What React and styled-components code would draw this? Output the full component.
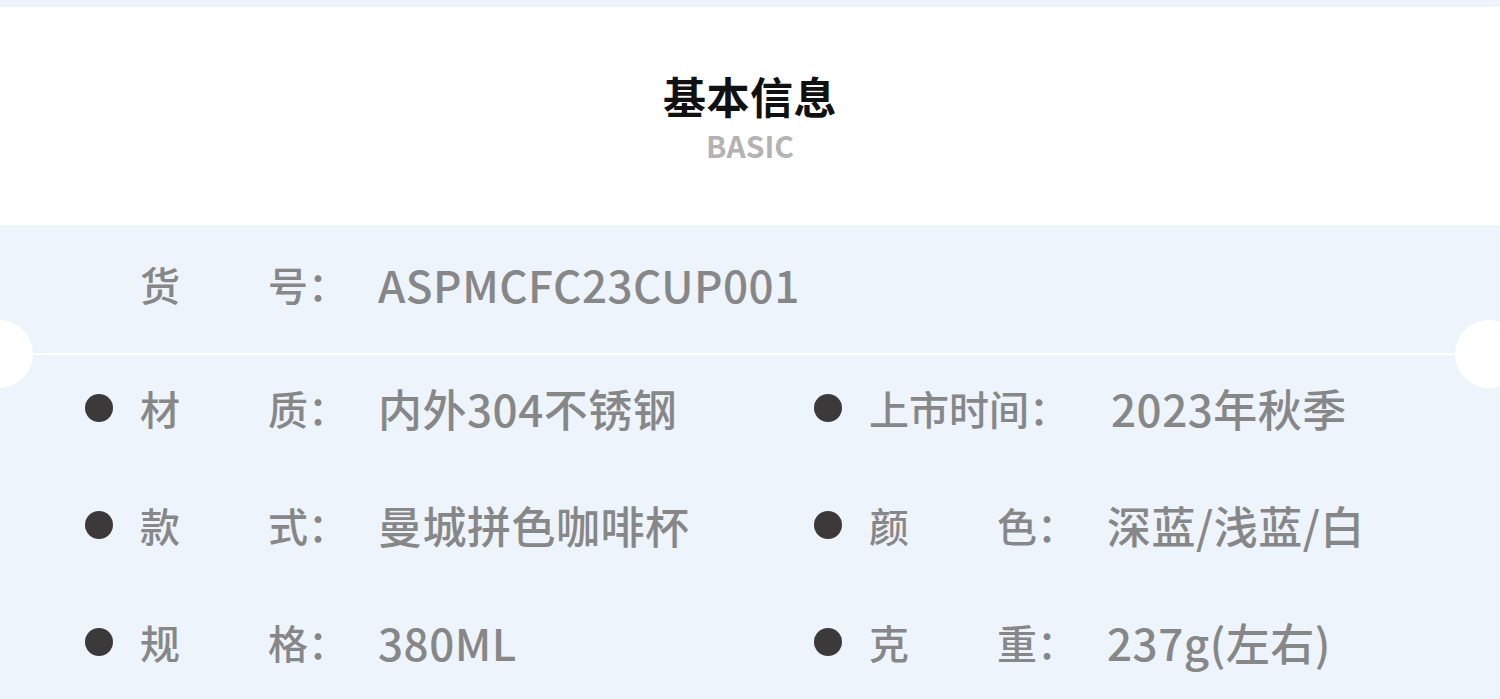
import React from 'react';
import styled, { createGlobalStyle } from 'styled-components';

const GlobalStyle = createGlobalStyle`
  html, body {
    margin: 0;
    padding: 0;
    background: #edf4fc;
    font-family: "Noto Sans CJK SC", "Noto Sans", sans-serif;
  }
`;

const Page = styled.div`
  width: 1500px;
  height: 699px;
  overflow: hidden;
  background: #edf4fc;
  padding-top: 7px;
  box-sizing: border-box;
`;

const Header = styled.div`
  height: 218px;
  background: #ffffff;
  display: flex;
  flex-direction: column;
  align-items: center;
  padding-top: 68px;
  box-sizing: border-box;
`;

const Title = styled.h1`
  margin: 0;
  font-size: 43px;
  line-height: 40px;
  font-weight: 700;
  color: #111;
  letter-spacing: 0.5px;
`;

const Subtitle = styled.div`
  margin-top: 15px;
  font-size: 30px;
  line-height: 30px;
  font-weight: 700;
  color: #b3b3b3;
`;

const Body = styled.div`
  padding-top: 19px;
`;

const Row = styled.div`
  display: flex;
  align-items: center;
  height: 80px;
  padding-left: ${p => p.$indent || 0}px;
`;

const Divider = styled.div`
  position: relative;
  height: 2px;
  margin: 29px 45px 13px 33px;
  background: #ffffff;

  &::before,
  &::after {
    content: '';
    position: absolute;
    top: 50%;
    width: 68px;
    height: 68px;
    margin-top: -34px;
    border-radius: 50%;
    background: #ffffff;
  }
  &::before {
    left: -68px;
  }
  &::after {
    right: -68px;
  }
`;

const Grid = styled.div`
  display: grid;
  grid-template-columns: 729px 1fr;
  row-gap: 37px;
  padding-left: 85px;
`;

const Item = styled.div`
  display: flex;
  align-items: center;
  height: 80px;
`;

const Dot = styled.span`
  width: 28px;
  height: 28px;
  border-radius: 50%;
  background: #3c393a;
  margin-right: 27px;
  flex-shrink: 0;
`;

const Key = styled.span`
  display: flex;
  width: ${p => (p.$wide ? 242 : 238)}px;
  flex-shrink: 0;
  font-size: 40px;
  line-height: 48px;
  font-weight: 500;
  color: #878787;
  white-space: nowrap;
`;

const Label = styled.span`
  width: ${p => (p.$wide ? 'auto' : '168px')};
  text-align: justify;
  text-align-last: justify;
`;

const Value = styled.span`
  font-size: 44px;
  line-height: 52px;
  font-weight: 500;
  letter-spacing: 0.5px;
  color: #878787;
  white-space: nowrap;
`;

function Field({ label, value, dot = true }) {
  const wide = label.length > 2;
  return (
    <Item>
      {dot && <Dot />}
      <Key $wide={wide}>
        <Label $wide={wide}>{label}</Label>
        <span>：</span>
      </Key>
      <Value>{value}</Value>
    </Item>
  );
}

const fields = [
  ['材质', '内外304不锈钢'],
  ['上市时间', '2023年秋季'],
  ['款式', '曼城拼色咖啡杯'],
  ['颜色', '深蓝/浅蓝/白'],
  ['规格', '380ML'],
  ['克重', '237g(左右)'],
];

export default function App() {
  return (
    <Page>
      <GlobalStyle />
      <Header>
        <Title>基本信息</Title>
        <Subtitle>BASIC</Subtitle>
      </Header>
      <Body>
        <Row $indent={140}>
          <Field label="货号" value="ASPMCFC23CUP001" dot={false} />
        </Row>
        <Divider />
        <Grid>
          {fields.map(([label, value]) => (
            <Field key={label} label={label} value={value} />
          ))}
        </Grid>
      </Body>
    </Page>
  );
}
